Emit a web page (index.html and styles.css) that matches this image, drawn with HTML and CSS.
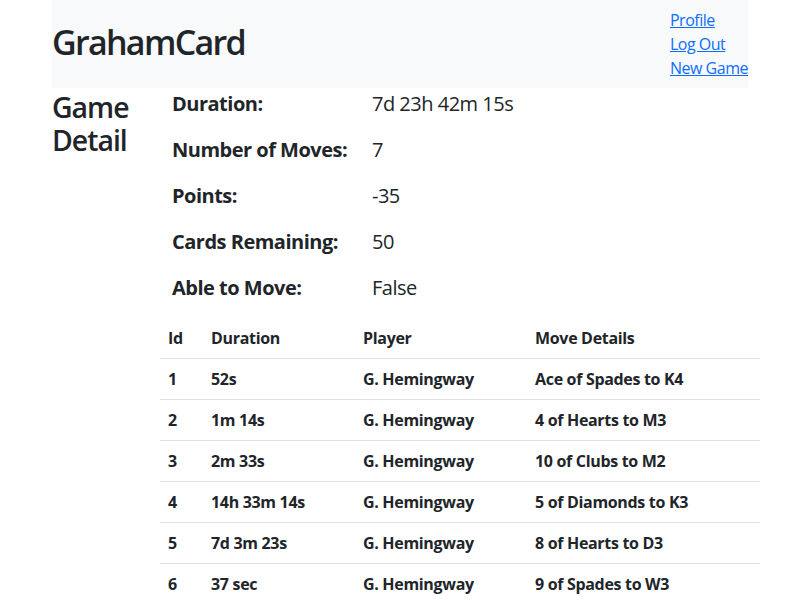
FILE: index.html
```html
<!DOCTYPE html>
<html lang="en">
<head>
<meta charset="utf-8">
<title>GrahamCard - Game Detail</title>
<link rel="stylesheet" href="styles.css">
</head>
<body>
<div class="container">
  <header class="topbar">
    <h1 class="brand">GrahamCard</h1>
    <nav class="links">
      <a href="#">Profile</a>
      <a href="#">Log Out</a>
      <a href="#">New Game</a>
    </nav>
  </header>
  <main class="main">
    <div class="side">
      <h2 class="title">Game Detail</h2>
    </div>
    <div class="content">
      <div class="stats">
        <div class="stat"><div class="label">Duration:</div><div class="value">7d 23h 42m 15s</div></div>
        <div class="stat"><div class="label">Number of Moves:</div><div class="value">7</div></div>
        <div class="stat"><div class="label">Points:</div><div class="value">-35</div></div>
        <div class="stat"><div class="label">Cards Remaining:</div><div class="value">50</div></div>
        <div class="stat"><div class="label">Able to Move:</div><div class="value">False</div></div>
      </div>
      <table class="moves">
        <thead>
          <tr><th class="c-id">Id</th><th class="c-dur">Duration</th><th class="c-pl">Player</th><th class="c-det">Move Details</th></tr>
        </thead>
        <tbody>
          <tr><td>1</td><td>52s</td><td>G. Hemingway</td><td>Ace of Spades to K4</td></tr>
          <tr><td>2</td><td>1m 14s</td><td>G. Hemingway</td><td>4 of Hearts to M3</td></tr>
          <tr><td>3</td><td>2m 33s</td><td>G. Hemingway</td><td>10 of Clubs to M2</td></tr>
          <tr><td>4</td><td>14h 33m 14s</td><td>G. Hemingway</td><td>5 of Diamonds to K3</td></tr>
          <tr><td>5</td><td>7d 3m 23s</td><td>G. Hemingway</td><td>8 of Hearts to D3</td></tr>
          <tr><td>6</td><td>37 sec</td><td>G. Hemingway</td><td>9 of Spades to W3</td></tr>
          <tr><td>7</td><td>7d 23h 1m 2s</td><td>G. Hemingway</td><td>Queen of Hearts to K2</td></tr>
        </tbody>
      </table>
    </div>
  </main>
</div>
</body>
</html>
```

FILE: styles.css
```css
* { box-sizing: border-box; }
html, body { margin: 0; padding: 0; }
body {
  font-family: "Segoe UI", "Open Sans", "Liberation Sans", sans-serif;
  color: #212529;
  background: #fff;
  font-size: 16px;
  line-height: 1.5;
  letter-spacing: -0.02em;
}
.container {
  width: 720px;
  margin: 0 auto;
  padding: 0 12px;
}
.topbar {
  background: #f8f9fa;
  height: 88px;
  display: flex;
  justify-content: space-between;
  align-items: center;
}
.brand {
  margin: 0 0 3px;
  font-size: 34px;
  font-weight: 600;
  line-height: 1.2;
  letter-spacing: -0.05em;
}
.links {
  display: flex;
  flex-direction: column;
  align-self: flex-start;
  padding-top: 8px;
  line-height: 24px;
  letter-spacing: -0.03em;
}
.links a { color: #0d6efd; text-decoration: underline; }
.main {
  display: flex;
  margin: 0 -12px;
}
.side {
  width: 120px;
  padding: 0 12px;
}
.title {
  margin: 3px 0 0;
  font-size: 28.4px;
  font-weight: 600;
  line-height: 1.17;
  letter-spacing: -0.035em;
}
.content {
  width: 600px;
}
.stats { padding: 1px 12px 0; }
.stat {
  display: flex;
  font-size: 20px;
  line-height: 30px;
  margin-bottom: 16px;
}
.stat:last-child { margin-bottom: 15px; }
.label { width: 200px; font-weight: 700; letter-spacing: -0.025em; }
.value { font-weight: 400; letter-spacing: -0.025em; }
.moves {
  width: 600px;
  border-collapse: collapse;
  font-weight: 700;
}
.moves th, .moves td {
  text-align: left;
  padding: 8px;
  line-height: 24px;
  border-bottom: 1px solid #dee2e6;
}
.c-id { width: 43px; }
.c-dur { width: 152px; }
.c-pl { width: 172px; }
```
